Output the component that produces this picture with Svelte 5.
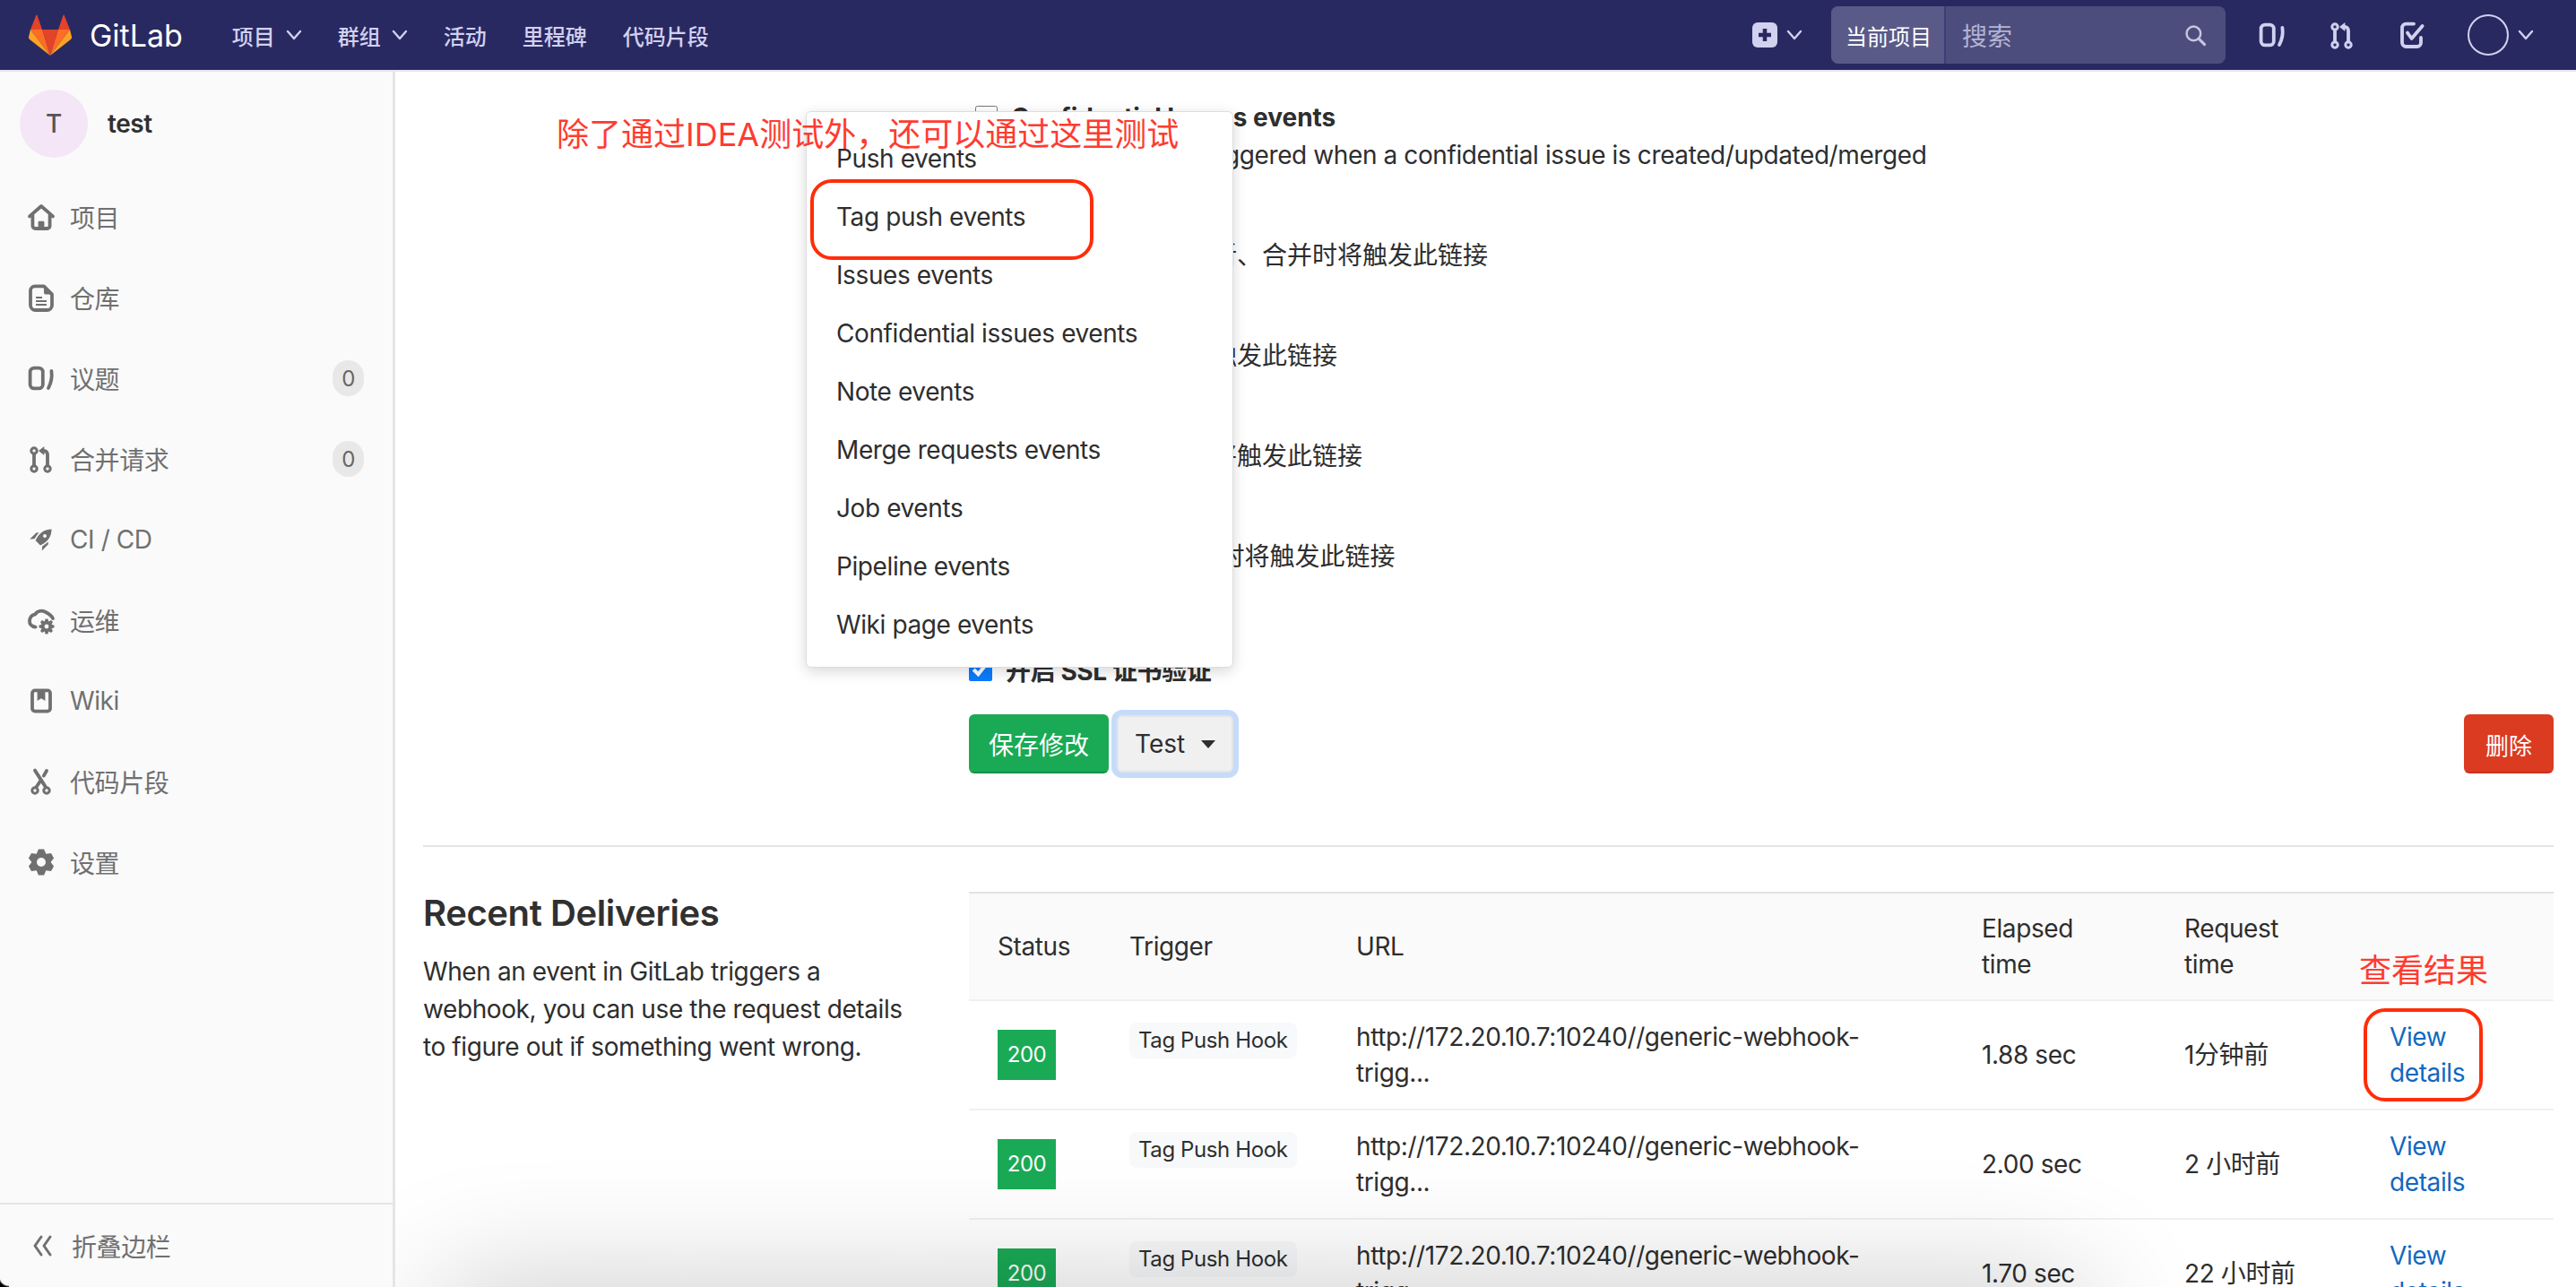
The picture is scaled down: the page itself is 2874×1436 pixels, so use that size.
<script>
	// builds a small toothed wheel with a hole, used by settings and ops icons
	function gear(cx, cy, outer, inner, hole, teeth, turn = 0) {
		let d = '';
		const step = (Math.PI * 2) / teeth;
		for (let i = 0; i < teeth; i++) {
			const a = i * step + turn;
			const pts = [
				[inner, a - step * 0.5],
				[outer, a - step * 0.2],
				[outer, a + step * 0.2]
			];
			for (const [r, t] of pts) {
				d += `${d ? 'L' : 'M'}${(cx + r * Math.cos(t)).toFixed(2)} ${(cy + r * Math.sin(t)).toFixed(2)}`;
			}
		}
		d += `Z M${cx + hole} ${cy}a${hole} ${hole} 0 1 0 ${-hole * 2} 0a${hole} ${hole} 0 1 0 ${hole * 2} 0z`;
		return d;
	}

	const icons = {
		home: {
			line: ['M1.500 7.700 8 2l6.500 5.700', 'M3.200 7v6a1.500 1.500 0 0 0 1.500 1.500h6.600a1.500 1.500 0 0 0 1.500-1.500V7'],
			fill: ['M6.300 15v-4a.6.6 0 0 1 .6-.6h2.200a.6.6 0 0 1 .6.6v4z']
		},
		doc: {
			line: ['M4.500 1.700h5L14 6.200v6a2.800 2.800 0 0 1-2.800 2.800H4.800A2.800 2.800 0 0 1 2 12.200V4.200a2.500 2.500 0 0 1 2.500-2.500z'],
			thin: ['M5 8h3.500M5 10h6M5 12h6'],
			fill: ['M9.500 1.700 14 6.200H10.500a1 1 0 0 1-1-1z']
		},
		issues: {
			line: ['M4 2.300h2.700a2.200 2.200 0 0 1 2.200 2.200v7a2.200 2.200 0 0 1-2.200 2.200H4a2.200 2.200 0 0 1-2.200-2.200v-7A2.200 2.200 0 0 1 4 2.300z', 'M13.700 4c.5 3.300 0 6.200-1.700 9.500']
		},
		mr: {
			line: ['M4 5.200v6.600', 'M11.500 11.800V5.500a2 2 0 0 0-2-2'],
			dots: [[4, 3.500], [4, 13.500], [11.500, 13.500]],
			fill: ['M9.700 1v5L6.500 3.500z']
		},
		rocket: {
			fill: [
				'M13.800 2.200C10 2.400 7.200 3.600 4.800 8.500L7.500 11.200C12.400 8.800 13.600 6 13.800 2.200ZM11 6a1 1 0 1 0-2 0 1 1 0 0 0 2 0z',
				'M1.600 7.800 5.200 4.200 6.700 4 4.200 7.600z',
				'M8.400 14.200 11.800 10.800 12 9.300 8.600 11.800z'
			]
		},
		ops: {
			line: ['M4.800 11.800C2.500 11.500 1.300 10 1.500 8.200 1.800 6.200 3 5 4.500 4.800 6 2.500 8.500 2.500 10.500 3.500 12.500 4.500 13.800 5.500 14.500 7'],
			fill: [gear(11, 11.500, 4.300, 3, 1.200, 8)]
		},
		book: {
			line: ['M4.500 2.200h7A1.500 1.500 0 0 1 13 3.700v8.600a1.500 1.500 0 0 1-1.500 1.500h-7A1.500 1.500 0 0 1 3 12.300V3.700a1.500 1.500 0 0 1 1.500-1.500z'],
			fill: ['M5.800 2.200h4.400v5.800L8 6.600 5.800 8z']
		},
		scissors: {
			line: ['M4.500 1.800 10.300 10.800', 'M11 2 9.400 4.800', 'M7.800 7.300 5.300 11'],
			dots: [[4.500, 13], [11, 13]]
		},
		gear: {
			fill: [gear(8, 8, 7.400, 5.300, 2.500, 6, Math.PI / 2)]
		},
		todo: {
			line: ['M13 9.500v2.800a2.200 2.200 0 0 1-2.200 2.200H4.700a2.200 2.200 0 0 1-2.200-2.200V4a2.200 2.200 0 0 1 2.200-2.200H9', 'M5.500 6.800 7.800 10 13.800 3']
		},
		search: {
			line: ['M10.800 10.800l3.700 3.700'],
			dots: [[7, 7, 4.800]]
		}
	};

	const sideItems = [
		{ icon: 'home', label: '项目' },
		{ icon: 'doc', label: '仓库' },
		{ icon: 'issues', label: '议题', count: 0 },
		{ icon: 'mr', label: '合并请求', count: 0 },
		{ icon: 'rocket', label: 'CI / CD' },
		{ icon: 'ops', label: '运维' },
		{ icon: 'book', label: 'Wiki' },
		{ icon: 'scissors', label: '代码片段' },
		{ icon: 'gear', label: '设置' }
	];

	const hooks = [
		{ title: 'Confidential Issues events', help: 'This URL will be triggered when a confidential issue is created/updated/merged' },
		{ title: '合并请求事件', help: '合并请求创建、更新、合并时将触发此链接' },
		{ title: '任务事件', help: '任务状态变更时将触发此链接' },
		{ title: '流水线事件', help: '流水线状态变更时将触发此链接' },
		{ title: 'Wiki 页面事件', help: 'Wiki 页面内容更新时将触发此链接' }
	];

	const testEvents = [
		'Push events',
		'Tag push events',
		'Issues events',
		'Confidential issues events',
		'Note events',
		'Merge requests events',
		'Job events',
		'Pipeline events',
		'Wiki page events'
	];

	const deliveries = [
		{ elapsed: '1.88 sec', when: '1分钟前' },
		{ elapsed: '2.00 sec', when: '2 小时前' },
		{ elapsed: '1.70 sec', when: '22 小时前' }
	];
</script>

{#snippet icon(name, size = 32)}
	<svg class="icon" width={size} height={size} viewBox="0 0 16 16">
		{#each icons[name].line ?? [] as d}
			<path {d} fill="none" stroke="currentColor" stroke-width="1.900" stroke-linecap="round" stroke-linejoin="round" />
		{/each}
		{#each icons[name].thin ?? [] as d}
			<path {d} fill="none" stroke="currentColor" stroke-width="1.100" />
		{/each}
		{#each icons[name].dots ?? [] as [cx, cy, r]}
			<circle {cx} {cy} r={r ?? 1.600} fill="none" stroke="currentColor" stroke-width="1.500" />
		{/each}
		{#each icons[name].fill ?? [] as d}
			<path {d} fill="currentColor" fill-rule="evenodd" />
		{/each}
	</svg>
{/snippet}

{#snippet chevron()}
	<svg class="chevron" width="18" height="12" viewBox="0 0 18 12">
		<path d="M2 2l7 8 7-8" fill="none" stroke="currentColor" stroke-width="2.400" stroke-linecap="round" stroke-linejoin="round" />
	</svg>
{/snippet}

<div class="page">
	<header class="navbar">
		<div class="brand">
			<svg width="48" height="46" viewBox="0 0 48 46">
				<path d="M24 46 15 17h18z" fill="#e24329" />
				<path d="M24 46 15 17H2z" fill="#fc6d26" />
				<path d="M24 46 33 17h13z" fill="#fc6d26" />
				<path d="M2 17 0 25q-.4 2 1.400 3.300L24 46z" fill="#fca326" />
				<path d="M46 17l2 8q.4 2-1.400 3.300L24 46z" fill="#fca326" />
				<path d="M2 17h13L9.500 1q-.5-1-1.200 0z" fill="#e24329" />
				<path d="M46 17H33l5.500-16q.5-1 1.200 0z" fill="#e24329" />
			</svg>
			<span class="brand-name">GitLab</span>
		</div>
		<nav class="nav-links">
			<span class="nav-link">项目 {@render chevron()}</span>
			<span class="nav-link">群组 {@render chevron()}</span>
			<span class="nav-link">活动</span>
			<span class="nav-link">里程碑</span>
			<span class="nav-link">代码片段</span>
		</nav>
		<div class="nav-right">
			<span class="new-btn">
				<svg width="28" height="28" viewBox="0 0 28 28">
					<rect width="28" height="28" rx="6" fill="#d1d1f0" />
					<path d="M14 7v14M7 14h14" stroke="#292961" stroke-width="4.500" />
				</svg>
				{@render chevron()}
			</span>
			<div class="search">
				<span class="search-scope">当前项目</span>
				<span class="search-input">搜索</span>
				<span class="search-icon">{@render icon('search', 26)}</span>
			</div>
			<span class="nav-icon">{@render icon('issues')}</span>
			<span class="nav-icon">{@render icon('mr')}</span>
			<span class="nav-icon">{@render icon('todo')}</span>
			<span class="user">
				<span class="user-avatar"></span>
				{@render chevron()}
			</span>
		</div>
	</header>

	<div class="body">
		<aside class="sidebar">
			<div class="project">
				<span class="project-avatar">T</span>
				<span class="project-name">test</span>
			</div>
			<ul class="side-list">
				{#each sideItems as item}
					<li class="side-item">
						{@render icon(item.icon)}
						<span class="side-label">{item.label}</span>
						{#if item.count !== undefined}
							<span class="side-count">{item.count}</span>
						{/if}
					</li>
				{/each}
			</ul>
			<div class="collapse">
				<svg width="26" height="26" viewBox="0 0 26 26">
					<path d="M12 3 5 13l7 10M22 3l-7 10 7 10" fill="none" stroke="currentColor" stroke-width="3" stroke-linecap="round" stroke-linejoin="round" />
				</svg>
				<span>折叠边栏</span>
			</div>
		</aside>

		<main class="main">
			<div class="hook-form">
				{#each hooks as hook, i}
					<div class="hook-row">
						<input type="checkbox" class="hook-check" />
						<div>
							<div class="hook-title">{hook.title}</div>
							<div class="hook-help" class:cjk={i > 0}>{hook.help}</div>
						</div>
					</div>
				{/each}
				<label class="ssl-row">
					<input type="checkbox" class="ssl-check" checked />
					<strong>开启 SSL 证书验证</strong>
				</label>
				<div class="actions">
					<button class="btn btn-save">保存修改</button>
					<div class="test-wrap">
						<button class="btn btn-test">Test <span class="caret"></span></button>
						<ul class="test-menu">
							{#each testEvents as ev}
								<li>{ev}</li>
							{/each}
						</ul>
					</div>
					<button class="btn btn-delete">删除</button>
				</div>
			</div>

			<hr class="divider" />

			<section class="deliveries">
				<div class="deliveries-intro">
					<h4>Recent Deliveries</h4>
					<p>When an event in GitLab triggers a webhook, you can use the request details to figure out if something went wrong.</p>
				</div>
				<table class="deliveries-table">
					<thead>
						<tr>
							<th class="col-status">Status</th>
							<th class="col-trigger">Trigger</th>
							<th class="col-url">URL</th>
							<th class="col-elapsed">Elapsed time</th>
							<th class="col-when">Request time</th>
							<th class="col-link"></th>
						</tr>
					</thead>
					<tbody>
						{#each deliveries as row}
							<tr>
								<td><span class="status-badge">200</span></td>
								<td class="cell-top"><span class="trigger-tag">Tag Push Hook</span></td>
								<td>http://172.20.10.7:10240//generic-webhook-trigg...</td>
								<td>{row.elapsed}</td>
								<td>{row.when}</td>
								<td><a class="view-link" href="#details">View details</a></td>
							</tr>
						{/each}
					</tbody>
				</table>
			</section>

			<!-- red marks drawn on top of the screenshot -->
			<div class="note note-top">除了通过IDEA测试外，还可以通过这里测试</div>
			<div class="ring ring-tag"></div>
			<div class="note note-result">查看结果</div>
			<div class="ring ring-view"></div>
			<div class="bottom-shade"></div>
		</main>
	</div>
	<div class="window-corner"></div>
</div>

<style>
	:global(body) {
		margin: 0;
		overflow: hidden;
		background: #fff;
	}

	.page {
		position: relative;
		height: 1436px;
		display: flex;
		flex-direction: column;
		overflow: hidden;
		font-family: Inter, 'Noto Sans CJK SC', sans-serif;
		font-size: 28px;
		letter-spacing: -0.4px;
		color: #2e2e2e;
	}

	.window-corner {
		position: absolute;
		left: 0;
		bottom: 0;
		width: 10px;
		height: 12px;
		background: radial-gradient(circle at 100% 0, transparent 10px, #000 12px);
	}

	.icon {
		flex: none;
		display: block;
	}

	.navbar {
		flex: none;
		height: 78px;
		border-bottom: 2px solid #e5e5ef;
		background: #292961;
		color: #d1d1f0;
		display: flex;
		align-items: center;
		padding: 0 47px 0 32px;
		letter-spacing: 0;
	}

	.brand {
		display: flex;
		align-items: center;
		gap: 20px;
		margin-right: 55px;
	}

	.brand-name {
		font-size: 34px;
		color: #fff;
	}

	.nav-links {
		display: flex;
		align-items: center;
		gap: 40px;
		font-size: 24px;
		font-weight: 500;
	}

	.nav-link {
		display: flex;
		align-items: center;
		gap: 12px;
	}

	.nav-right {
		margin-left: auto;
		display: flex;
		align-items: center;
	}

	.new-btn {
		display: flex;
		align-items: center;
		gap: 10px;
		margin-right: 32px;
	}

	.search {
		width: 440px;
		height: 64px;
		margin-right: 36px;
		border-radius: 8px;
		overflow: hidden;
		display: flex;
		align-items: center;
		background: #4d4d7d;
		font-size: 24px;
	}

	.search-scope {
		align-self: stretch;
		display: flex;
		align-items: center;
		padding: 0 16px;
		width: 128px;
		box-sizing: border-box;
		background: #5a5a88;
		border-right: 2px solid #3e3e78;
		color: #fff;
		white-space: nowrap;
	}

	.search-input {
		margin-left: 18px;
		font-size: 28px;
		color: #b3b3d4;
	}

	.search-icon {
		margin-left: auto;
		margin-right: 21px;
		color: #c6c6e0;
	}

	.nav-icon {
		margin-right: 46px;
	}

	.user {
		display: flex;
		align-items: center;
		gap: 10px;
	}

	.user-avatar {
		width: 42px;
		height: 42px;
		border: 2px solid #d1d1f0;
		border-radius: 50%;
	}

	.body {
		flex: 1;
		min-height: 0;
		display: flex;
	}

	.sidebar {
		flex: none;
		width: 438px;
		border-right: 3px solid #e5e5e5;
		background: #fafafa;
		display: flex;
		flex-direction: column;
		color: #707070;
	}

	.project {
		display: flex;
		align-items: center;
		gap: 22px;
		padding: 20px 22px 0;
	}

	.project-avatar {
		width: 76px;
		height: 76px;
		border-radius: 50%;
		background: #f4e6f6;
		color: #555;
		display: flex;
		align-items: center;
		justify-content: center;
		font-size: 28px;
		font-weight: 500;
	}

	.project-name {
		font-weight: 600;
		color: #303030;
	}

	.side-list {
		list-style: none;
		margin: 0;
		padding: 21px 0 0;
	}

	.side-item {
		height: 90px;
		padding: 0 32px 0 30px;
		display: flex;
		align-items: center;
		gap: 16px;
	}

	.side-count {
		margin-left: auto;
		width: 35px;
		height: 40px;
		border-radius: 20px;
		background: #e8e8e8;
		color: #666;
		font-size: 24px;
		display: flex;
		align-items: center;
		justify-content: center;
	}

	.collapse {
		margin-top: auto;
		height: 92px;
		border-top: 2px solid #e5e5e5;
		display: flex;
		align-items: center;
		gap: 20px;
		padding-left: 34px;
	}

	.main {
		flex: 1;
		min-width: 0;
		position: relative;
		overflow: hidden;
		box-sizing: border-box;
		padding: 38px 25px 0 31px;
	}

	.hook-form {
		margin-left: 609px;
	}

	.hook-row {
		display: flex;
		gap: 15px;
		height: 112px;
		padding-left: 7px;
	}

	.hook-check {
		width: 25px;
		height: 25px;
		margin: 0;
		flex: none;
	}

	.hook-title {
		font-weight: 700;
		letter-spacing: 0;
		line-height: 30px;
		margin-top: -2px;
	}

	.hook-help {
		line-height: 42px;
		margin-top: 6px;
		white-space: nowrap;
	}

	.hook-help.cjk {
		letter-spacing: 0;
	}

	.ssl-row {
		display: flex;
		align-items: center;
		gap: 15px;
		height: 30px;
		margin-top: 54px;
	}

	.ssl-check {
		width: 26px;
		height: 26px;
		margin: 0;
		accent-color: #0a7cff;
	}

	.actions {
		display: flex;
		align-items: center;
		gap: 9px;
		margin-top: 35px;
	}

	.btn {
		font: inherit;
		height: 66px;
		border-radius: 6px;
		border: 2px solid transparent;
		padding: 0 18px;
		box-sizing: border-box;
	}

	.btn-save {
		width: 156px;
		padding: 0;
		background: #1aaa55;
		border-color: #1aaa55 #1aaa55 #168f48;
		color: #fff;
	}

	.btn-test {
		display: flex;
		align-items: center;
		gap: 18px;
		width: 130px;
		height: 64px;
		background: #f0f0f0;
		border-color: #e5e5e5;
		color: #2e2e2e;
		box-shadow: 0 0 0 6px #c6dbfa;
	}

	.caret {
		width: 0;
		height: 0;
		border-left: 8px solid transparent;
		border-right: 8px solid transparent;
		border-top: 9px solid #2e2e2e;
	}

	.test-wrap {
		position: relative;
	}

	.test-menu {
		position: absolute;
		right: 0;
		bottom: 117px;
		width: 477px;
		box-sizing: border-box;
		margin: 0;
		padding: 20px 0 14px;
		list-style: none;
		background: #fff;
		border: 1px solid #ddd;
		border-radius: 6px;
		box-shadow: 0 4px 16px rgba(0, 0, 0, 0.16);
	}

	.test-menu li {
		height: 65px;
		line-height: 65px;
		padding-left: 33px;
	}

	.btn-delete {
		margin-left: auto;
		width: 100px;
		padding: 0;
		background: #db3b21;
		border-color: #db3b21 #db3b21 #c5341d;
		color: #fff;
		font-size: 26px;
	}

	.divider {
		border: 0;
		border-top: 2px solid #e5e5e5;
		margin: 80px 0 50px;
	}

	.deliveries {
		display: grid;
		grid-template-columns: 609px 1fr;
	}

	.deliveries-intro {
		margin-top: -4px;
	}

	.deliveries-intro h4 {
		margin: 0;
		font-size: 40px;
		line-height: 56px;
		font-weight: 600;
		color: #303030;
	}

	.deliveries-intro p {
		margin: 16px 0 0;
		max-width: 560px;
		line-height: 42px;
	}

	.deliveries-table {
		width: 100%;
		table-layout: fixed;
		border-collapse: collapse;
		line-height: 40px;
		border-top: 2px solid #dfe3e6;
	}

	.deliveries-table th {
		height: 120px;
		background: #fafafa;
		font-weight: 400;
		text-align: left;
		padding: 0 32px;
		box-sizing: border-box;
		border-bottom: 2px solid #f0f0f0;
	}

	.deliveries-table td {
		height: 122px;
		padding: 0 32px;
		box-sizing: border-box;
		border-bottom: 2px solid #f0f0f0;
		vertical-align: middle;
	}

	.col-status {
		width: 147px;
	}
	.col-trigger {
		width: 253px;
	}
	.col-url {
		width: 698px;
	}
	.col-elapsed {
		width: 226px;
	}
	.col-when {
		width: 229px;
	}

	.deliveries-table td.cell-top {
		vertical-align: top;
		padding-top: 24px;
	}

	.status-badge {
		display: block;
		width: 65px;
		height: 56px;
		line-height: 56px;
		text-align: center;
		background: #1aaa55;
		color: #fff;
		font-size: 24px;
	}

	.trigger-tag {
		display: block;
		width: 187px;
		height: 40px;
		line-height: 40px;
		padding-left: 10px;
		box-sizing: border-box;
		border-radius: 8px;
		background: #f7f9fb;
		font-size: 24px;
		white-space: nowrap;
	}

	.view-link {
		color: #1068bf;
		text-decoration: none;
	}

	.note {
		position: absolute;
		font-size: 36px;
		line-height: 44px;
		color: #ff3b30;
		white-space: nowrap;
		letter-spacing: 0;
	}

	.note-top {
		left: 180px;
		top: 48px;
	}

	.note-result {
		left: 2191px;
		top: 981px;
	}

	.ring {
		position: absolute;
		box-sizing: border-box;
		border: 4px solid #ff2d0a;
		border-radius: 24px;
	}

	.ring-tag {
		left: 463px;
		top: 120px;
		width: 316px;
		height: 90px;
	}

	.ring-view {
		left: 2196px;
		top: 1045px;
		width: 133px;
		height: 104px;
	}

	.bottom-shade {
		position: absolute;
		left: 50px;
		right: 550px;
		bottom: -200px;
		height: 200px;
		box-shadow: 0 0 140px rgba(0, 0, 0, 0.22);
		pointer-events: none;
	}
</style>
